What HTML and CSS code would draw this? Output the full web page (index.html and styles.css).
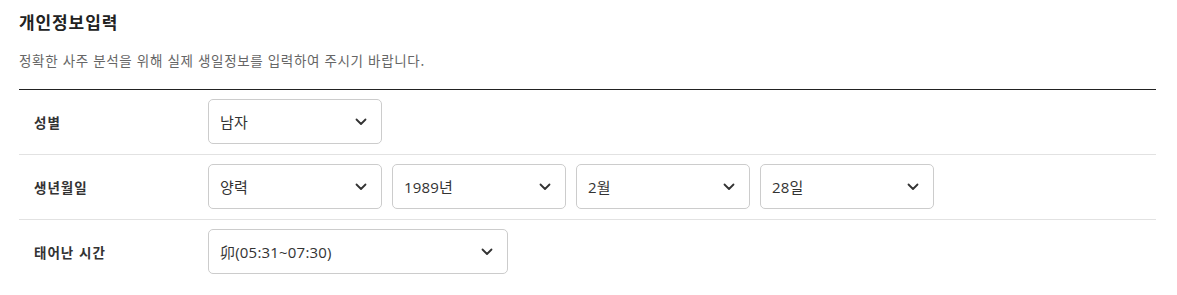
FILE: index.html
```html
<!DOCTYPE html>
<html lang="ko">
<head>
<meta charset="utf-8">
<title>개인정보입력</title>
<link rel="stylesheet" href="styles.css">
</head>
<body>
<div class="wrap">
  <h2 class="title">개인정보입력</h2>
  <p class="desc">정확한 사주 분석을 위해 실제 생일정보를 입력하여 주시기 바랍니다.</p>
  <div class="form">
    <div class="row">
      <div class="label">성별</div>
      <div class="fields">
        <div class="select"><span>남자</span><svg class="chev" viewBox="0 0 12 8" width="12" height="8"><path d="M1.5 1.5 L6 6 L10.5 1.5"/></svg></div>
      </div>
    </div>
    <div class="row">
      <div class="label">생년월일</div>
      <div class="fields">
        <div class="select"><span>양력</span><svg class="chev" viewBox="0 0 12 8" width="12" height="8"><path d="M1.5 1.5 L6 6 L10.5 1.5"/></svg></div>
        <div class="select"><span>1989년</span><svg class="chev" viewBox="0 0 12 8" width="12" height="8"><path d="M1.5 1.5 L6 6 L10.5 1.5"/></svg></div>
        <div class="select"><span>2월</span><svg class="chev" viewBox="0 0 12 8" width="12" height="8"><path d="M1.5 1.5 L6 6 L10.5 1.5"/></svg></div>
        <div class="select"><span>28일</span><svg class="chev" viewBox="0 0 12 8" width="12" height="8"><path d="M1.5 1.5 L6 6 L10.5 1.5"/></svg></div>
      </div>
    </div>
    <div class="row last">
      <div class="label">태어난 시간</div>
      <div class="fields">
        <div class="select wide"><span>卯(05:31~07:30)</span><svg class="chev" viewBox="0 0 12 8" width="12" height="8"><path d="M1.5 1.5 L6 6 L10.5 1.5"/></svg></div>
      </div>
    </div>
  </div>
</div>
</body>
</html>
```
FILE: styles.css
```css
html, body {
  margin: 0;
  padding: 0;
  background: #fff;
}
body {
  font-family: "Noto Sans CJK KR", "Noto Sans", sans-serif;
  color: #333;
}
.wrap {
  padding: 10px 21px 0 19px;
}
.title {
  margin: 0;
  font-size: 17px;
  line-height: 24px;
  letter-spacing: 0.9px;
  font-weight: 700;
  color: #222;
}
.desc {
  margin: 16px 0 19px;
  font-size: 13.5px;
  line-height: 20px;
  letter-spacing: 0.65px;
  color: #666;
}
.form {
  border-top: 1px solid #222;
}
.row {
  display: flex;
  align-items: center;
  padding: 9px 0 10px;
  border-bottom: 1px solid #e2e2e2;
}
.row.last {
  border-bottom: none;
}
.label {
  width: 174px;
  padding-left: 15px;
  font-size: 13.5px;
  letter-spacing: 1px;
  font-weight: 700;
  color: #333;
}
.fields {
  display: flex;
  gap: 10px;
}
.select {
  box-sizing: border-box;
  width: 174px;
  height: 45px;
  border: 1px solid #ccc;
  border-radius: 5px;
  display: flex;
  align-items: center;
  justify-content: space-between;
  padding: 0 14px 0 11px;
  font-family: "Open Sans", "Noto Sans CJK KR", sans-serif;
  font-size: 15px;
  letter-spacing: 0.2px;
  color: #333;
}
.select.wide {
  width: 300px;
}
.chev {
  fill: none;
  stroke: #333;
  stroke-width: 1.8;
  stroke-linecap: round;
  stroke-linejoin: round;
}
```
